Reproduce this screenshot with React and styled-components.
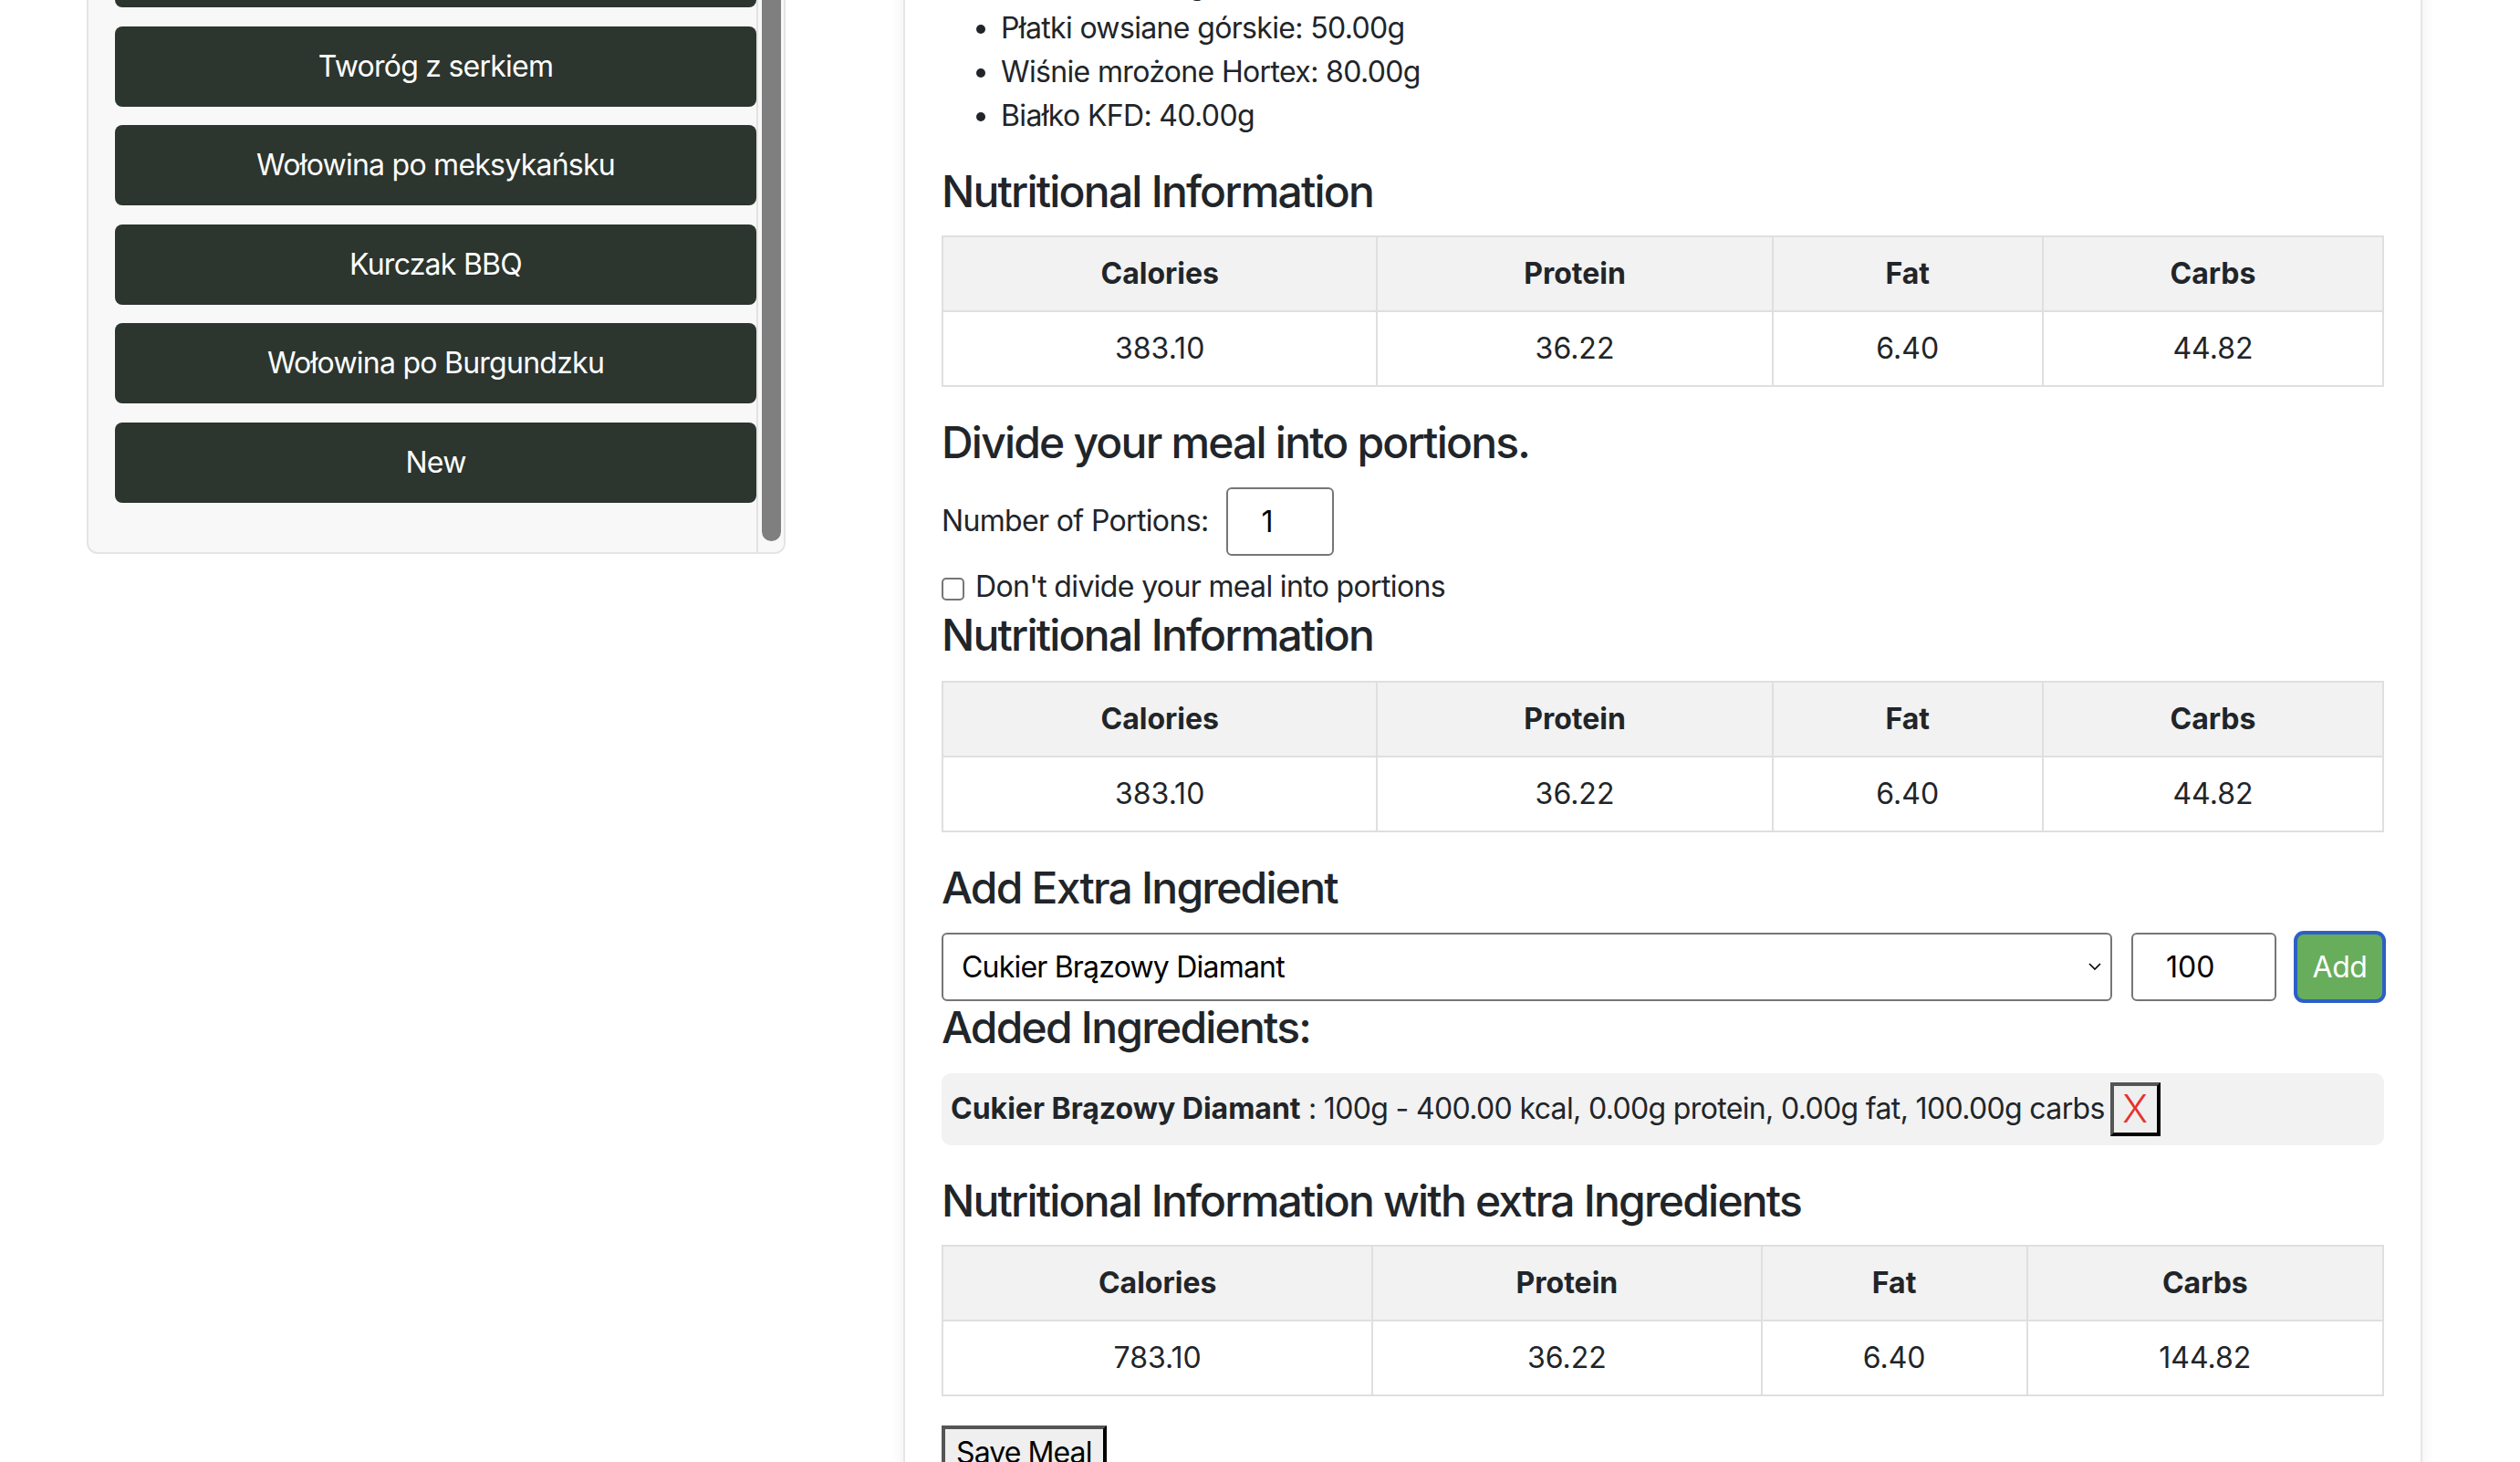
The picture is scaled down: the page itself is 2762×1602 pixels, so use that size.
import React, { useLayoutEffect, useRef } from "react";
import styled, { createGlobalStyle } from "styled-components";

const GlobalStyle = createGlobalStyle`
  *, *::before, *::after { box-sizing: border-box; }
  html, body {
    margin: 0;
    padding: 0;
    height: 100%;
    overflow: hidden;
    background: #ffffff;
  }
  html { scrollbar-width: none; }
  body {
    font-family: Inter, "Noto Sans", "Liberation Sans", sans-serif;
    font-size: 32px;
    line-height: 48px;
    letter-spacing: -0.65px;
    color: #212529;
  }
`;

const Viewport = styled.div`
  height: 100vh;
  overflow: hidden;
`;

const Layout = styled.div`
  display: grid;
  grid-template-columns: 766px 1665px;
  column-gap: 129px;
  align-items: start;
  padding: 0 107px 120px 95px;
`;

/* ---------- left: meal list ---------- */

const MealCard = styled.div`
  display: flex;
  height: 816px;
  overflow: hidden;
  background: #f8f8f8;
  border: 2px solid #e4e4e4;
  border-radius: 12px;
`;

const MealScroller = styled.div`
  flex: 1;
  min-width: 0;
  overflow: hidden;
`;

const MealList = styled.div`
  display: flex;
  flex-direction: column;
  gap: 20.5px;
  padding: 20px 0 54px 29px;
`;

const MealButton = styled.button`
  height: 88px;
  width: 100%;
  border: none;
  border-radius: 8px;
  background: #2c352e;
  color: #ffffff;
  font-family: inherit;
  font-size: 32px;
  line-height: 48px;
  letter-spacing: -0.75px;
  text-align: center;
  cursor: pointer;
`;

const ScrollRail = styled.div`
  flex: none;
  width: 30px;
  display: flex;
  flex-direction: column;
  justify-content: flex-end;
  padding: 0 3px 12px 4px;
  border-left: 2px solid #e2e2e2;
  background: #f8f8f8;
`;

const ScrollThumb = styled.div`
  height: ${(p) => p.$length}px;
  border-radius: 11px;
  background: #7f7f7f;
`;

/* ---------- right: meal details ---------- */

const DetailCard = styled.div`
  background: #ffffff;
  border: 2px solid #e6e6e6;
  border-radius: 12px;
  box-shadow: 0 0 16px rgba(0, 0, 0, 0.07);
  padding: 40px;
`;

const Heading = styled.h4`
  margin: 0 0 ${(p) => (p.$gap != null ? p.$gap : 20)}px;
  font-size: 48px;
  line-height: 57.6px;
  font-weight: 500;
  letter-spacing: -1.8px;
  color: #212529;
`;

const IngredientList = styled.ul`
  margin: 0 0 30px;
  padding-left: 65px;
  & > li { line-height: 48px; }
`;

const NutritionTable = styled.table`
  width: 100%;
  table-layout: fixed;
  border-collapse: collapse;
  margin-bottom: 32px;
  letter-spacing: 0;

  th, td {
    border: 2px solid #dfdfdf;
    padding: 16px;
    text-align: center;
    line-height: 48px;
    font-size: 32px;
  }
  th {
    background: #f2f2f2;
    font-weight: 700;
    color: #212529;
  }
  td { color: #212529; }
`;

const PortionRow = styled.div`
  display: flex;
  align-items: center;
  gap: 20px;
  margin-bottom: 10px;
`;

const NumberField = styled.input`
  width: ${(p) => p.$width}px;
  height: 75px;
  border: 2px solid #767676;
  border-radius: 6px;
  padding: 0 0 0 36px;
  font-family: inherit;
  font-size: 32px;
  letter-spacing: 0;
  color: #000;
  background: #fff;
  -moz-appearance: textfield;
  &::-webkit-inner-spin-button,
  &::-webkit-outer-spin-button { -webkit-appearance: none; margin: 0; }
`;

const CheckLabel = styled.label`
  display: flex;
  align-items: center;
  gap: 12px;
  line-height: 48px;
`;

const CheckBox = styled.input`
  appearance: none;
  -webkit-appearance: none;
  width: 25px;
  height: 25px;
  margin: 6px 0 0;
  border: 2px solid #767676;
  border-radius: 5px;
  background: #fff;
`;

const AddRow = styled.div`
  display: flex;
  align-items: center;
  gap: 21px;
`;

const SelectWrap = styled.div`
  position: relative;
  flex: 1;
  height: 75px;
`;

const Select = styled.select`
  appearance: none;
  -webkit-appearance: none;
  width: 100%;
  height: 100%;
  border: 2px solid #767676;
  border-radius: 6px;
  padding: 0 50px 0 20px;
  background: #fff;
  font-family: inherit;
  font-size: 32px;
  letter-spacing: -0.8px;
  color: #000;
`;

const Chevron = styled.svg`
  position: absolute;
  right: 12px;
  top: 50%;
  transform: translateY(-50%);
  pointer-events: none;
`;

const AddButton = styled.button`
  width: 97px;
  height: 75px;
  border: 2px solid #2d5fc6;
  box-shadow: 0 0 0 2px #2d5fc6;
  border-radius: 9px;
  background: #67ad5b;
  color: #ffffff;
  font-family: inherit;
  font-size: 32px;
  letter-spacing: -0.4px;
  padding: 0;
`;

const AddedItem = styled.div`
  display: flex;
  align-items: center;
  gap: 6px;
  min-height: 79px;
  padding: 0 10px;
  background: #f2f2f2;
  border-radius: 10px;
  margin-bottom: 32px;
  color: #212529;
  & b { font-weight: 700; letter-spacing: 0; }
`;

const ClassicButton = styled.button`
  display: inline-flex;
  align-items: center;
  justify-content: center;
  border-style: solid;
  border-width: 4px;
  border-color: #555 #000 #000 #555;
  background: #efefef;
  font-family: inherit;
  letter-spacing: -0.9px;
  color: #000;
  font-size: 32px;
  line-height: 1;
  padding: 10px 12px;
  cursor: pointer;
`;

const RemoveButton = styled(ClassicButton)`
  flex: none;
  width: 55px;
  height: 59px;
  padding: 0;
  color: #e5322d;
  font-size: 42px;
  font-weight: 300;
  letter-spacing: 0;
`;

const meals = [
  "Owsianka z wiśniami",
  "Jajecznica na maśle",
  "Kurczak z ryżem",
  "Tworóg z serkiem",
  "Wołowina po meksykańsku",
  "Kurczak BBQ",
  "Wołowina po Burgundzku",
  "New",
];

const ingredients = [
  "Mleko 2%: 200.00g",
  "Banan: 100.00g",
  "Płatki owsiane górskie: 50.00g",
  "Wiśnie mrożone Hortex: 80.00g",
  "Białko KFD: 40.00g",
];

const baseWidths = [30.17, 27.44, 18.76, 23.63];
const extraWidths = [29.85, 26.99, 18.44, 24.72];

function Nutrition({ values, widths }) {
  const heads = ["Calories", "Protein", "Fat", "Carbs"];
  return (
    <NutritionTable>
      <colgroup>
        {widths.map((w, i) => (
          <col key={i} style={{ width: `${w}%` }} />
        ))}
      </colgroup>
      <thead>
        <tr>
          {heads.map((h) => (
            <th key={h}>{h}</th>
          ))}
        </tr>
      </thead>
      <tbody>
        <tr>
          {values.map((v, i) => (
            <td key={i}>{v}</td>
          ))}
        </tr>
      </tbody>
    </NutritionTable>
  );
}

export default function App() {
  const viewRef = useRef(null);
  const listRef = useRef(null);

  useLayoutEffect(() => {
    if (viewRef.current) viewRef.current.scrollTop = 209;
    if (listRef.current) listRef.current.scrollTop = listRef.current.scrollHeight;
  }, []);

  const base = ["383.10", "36.22", "6.40", "44.82"];

  return (
    <>
      <GlobalStyle />
      <Viewport ref={viewRef}>
        <Layout>
          <MealCard>
            <MealScroller ref={listRef}>
              <MealList>
                {meals.map((m) => (
                  <MealButton key={m}>{m}</MealButton>
                ))}
              </MealList>
            </MealScroller>
            <ScrollRail>
              <ScrollThumb $length={700} />
            </ScrollRail>
          </MealCard>

          <DetailCard>
            <Heading>Owsianka z wiśniami</Heading>
            <IngredientList>
              {ingredients.map((i) => (
                <li key={i}>{i}</li>
              ))}
            </IngredientList>

            <Heading>Nutritional Information</Heading>
            <Nutrition values={base} widths={baseWidths} />

            <Heading>Divide your meal into portions.</Heading>
            <PortionRow>
              <span>Number of Portions:</span>
              <NumberField type="number" defaultValue={1} $width={118} />
            </PortionRow>
            <CheckLabel>
              <CheckBox type="checkbox" />
              <span>Don't divide your meal into portions</span>
            </CheckLabel>

            <Heading $gap={22}>Nutritional Information</Heading>
            <Nutrition values={base} widths={baseWidths} />

            <Heading>Add Extra Ingredient</Heading>
            <AddRow>
              <SelectWrap>
                <Select defaultValue="Cukier Brązowy Diamant">
                  <option>Cukier Brązowy Diamant</option>
                  <option>Płatki owsiane górskie</option>
                  <option>Białko KFD</option>
                </Select>
                <Chevron width="14" height="8" viewBox="0 0 14 8">
                  <path d="M1 1l6 6 6-6" fill="none" stroke="#000" strokeWidth="1.6" />
                </Chevron>
              </SelectWrap>
              <NumberField type="number" defaultValue={100} $width={159} />
              <AddButton>Add</AddButton>
            </AddRow>

            <Heading $gap={21}>Added Ingredients:</Heading>
            <AddedItem>
              <span>
                <b>Cukier Brązowy Diamant</b> : 100g - 400.00 kcal, 0.00g protein, 0.00g fat, 100.00g carbs
              </span>
              <RemoveButton>X</RemoveButton>
            </AddedItem>

            <Heading>Nutritional Information with extra Ingredients</Heading>
            <Nutrition values={["783.10", "36.22", "6.40", "144.82"]} widths={extraWidths} />

            <ClassicButton>Save Meal</ClassicButton>
          </DetailCard>
        </Layout>
      </Viewport>
    </>
  );
}
